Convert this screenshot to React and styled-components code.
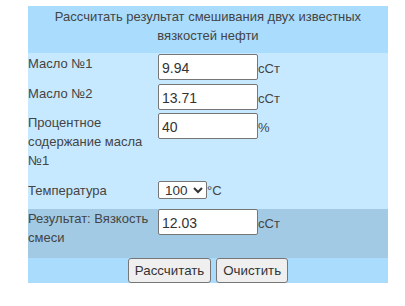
import React from "react";
import styled, { createGlobalStyle } from "styled-components";

const GlobalStyle = createGlobalStyle`
  body {
    margin: 0;
    background: #fff;
    font-family: "Liberation Sans", Arial, sans-serif;
  }
`;

const Page = styled.div`
  padding: 6px 0 0 28px;
`;

const Form = styled.div`
  width: 360px;
  color: #444;
  font-size: 13px;
  line-height: 19px;
`;

const Header = styled.div`
  background: #aadcfe;
  text-align: center;
  height: 47px;
  box-sizing: border-box;
  padding-top: 1px;
`;

const Row = styled.div`
  display: grid;
  grid-template-columns: 130px 1fr;
  box-sizing: border-box;
  height: ${(p) => p.$h}px;
  padding-top: ${(p) => p.$pt || 0}px;
  background: ${(p) => (p.$result ? "#a2cae5" : "#c7e9ff")};
`;

const Label = styled.div``;

const Value = styled.div`
  white-space: nowrap;
`;

const Field = styled.input`
  box-sizing: border-box;
  width: 100px;
  height: 26px;
  margin: 0;
  padding: 2px 3px 0;
  border: 1px solid #767676;
  border-radius: 2px;
  font-family: "Liberation Sans", Arial, sans-serif;
  font-size: 14px;
  color: #333;
  vertical-align: baseline;
  background: #fff;
`;

const Unit = styled.span`
  font-size: 13px;
`;

const Select = styled.select`
  height: 18px;
  width: 49px;
  margin: 0;
  padding: 0 0 0 2px;
  border: 1px solid #767676;
  border-radius: 2px;
  font-family: "Liberation Sans", Arial, sans-serif;
  font-size: 13.5px;
  color: #333;
  background: #fff;
  vertical-align: top;
`;

const Buttons = styled.div`
  background: #aadcfe;
  height: 25px;
  display: flex;
  justify-content: center;
  gap: 5px;
`;

const Button = styled.button`
  box-sizing: border-box;
  height: 25px;
  margin: 0;
  padding: 0 6px;
  border: 1px solid #767676;
  border-radius: 3px;
  background: #efefef;
  font-family: "Liberation Sans", Arial, sans-serif;
  font-size: 13.3px;
  color: #333;
`;

const App = () => {
  return (
    <Page>
      <GlobalStyle />
      <Form>
        <Header>
          Рассчитать результат смешивания двух известных
          <br />
          вязкостей нефти
        </Header>
        <Row $h={30} $pt={1}>
          <Label>Масло №1</Label>
          <Value>
            <Field defaultValue="9.94" />
            <Unit>сСт</Unit>
          </Value>
        </Row>
        <Row $h={30} $pt={1}>
          <Label>Масло №2</Label>
          <Value>
            <Field defaultValue="13.71" />
            <Unit>сСт</Unit>
          </Value>
        </Row>
        <Row $h={63} $pt={0}>
          <Label>
            Процентное
            <br />
            содержание масла
            <br />
            №1
          </Label>
          <Value>
            <Field defaultValue="40" />
            <Unit>%</Unit>
          </Value>
        </Row>
        <Row $h={33} $pt={5}>
          <Label>Температура</Label>
          <Value>
            <Select defaultValue="100">
              <option value="20">20</option>
              <option value="40">40</option>
              <option value="50">50</option>
              <option value="100">100</option>
            </Select>
            <Unit>°C</Unit>
          </Value>
        </Row>
        <Row $result $h={49} $pt={0}>
          <Label>
            Результат: Вязкость
            <br />
            смеси
          </Label>
          <Value>
            <Field defaultValue="12.03" />
            <Unit>сСт</Unit>
          </Value>
        </Row>
        <Buttons>
          <Button>Рассчитать</Button>
          <Button>Очистить</Button>
        </Buttons>
      </Form>
    </Page>
  );
};

export default App;
